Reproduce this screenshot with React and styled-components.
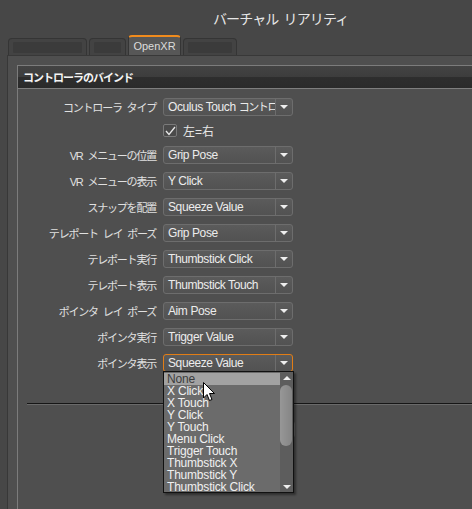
import styled, { createGlobalStyle } from "styled-components";

const GlobalStyle = createGlobalStyle`
  html, body {
    margin: 0;
    padding: 0;
    background: #474747;
  }
  body {
    font-family: "Liberation Sans", "Noto Sans CJK JP", sans-serif;
  }
`;

const Window = styled.div`
  width: 472px;
  height: 509px;
  overflow: hidden;
  background: #474747;
  display: flex;
  flex-direction: column;
`;

const TitleBar = styled.div`
  height: 35px;
  display: flex;
  align-items: center;
  padding-left: 213px;
  flex-shrink: 0;
`;

const Title = styled.h1`
  margin: 0;
  font-family: "Noto Sans CJK JP", sans-serif;
  font-size: 14px;
  font-weight: 400;
  letter-spacing: -0.9px;
  word-spacing: 3px;
  color: #e6e6e6;
`;

const TabBar = styled.div`
  height: 20px;
  display: flex;
  align-items: flex-end;
  gap: 2px;
  padding-left: 8px;
  flex-shrink: 0;
`;

const Tab = styled.div`
  box-sizing: border-box;
  width: ${(p) => p.$w}px;
  height: ${(p) => (p.$active ? 20 : 17)}px;
  border: 1px solid #353535;
  border-bottom: none;
  border-top: ${(p) => (p.$active ? "2px solid #f08b1d" : "1px solid #353535")};
  border-radius: 4px 4px 0 0;
  background: ${(p) => (p.$active ? "#575757" : "#434343")};
  padding: ${(p) => (p.$active ? "0" : "3px 4px 2px")};
  display: flex;
  align-items: center;
  justify-content: center;
  font-size: 11px;
  color: #dcdcdc;
`;

const TabInner = styled.div`
  width: 100%;
  height: 100%;
  background: #3b3b3b;
  border-radius: 1px;
`;

const Panel = styled.div`
  flex: 1;
  margin-left: 7px;
  border-left: 1px solid #383838;
  border-top: 1px solid #383838;
  background: #4f4f4f;
  padding: 9px 0 0 9px;
`;

const Group = styled.div`
  height: 100%;
  border-left: 1px solid #7c7c7c;
  border-top: 1px solid #7c7c7c;
`;

const GroupHeader = styled.div`
  height: 22px;
  border-bottom: 1px solid #7e7e7e;
  background: linear-gradient(#434343 0%, #3d3d3d 48%, #2e2e2e 52%, #2a2a2a 100%);
  display: flex;
  align-items: center;
  padding-left: 5px;
  font-family: "Noto Sans CJK JP", sans-serif;
  font-size: 11px;
  font-weight: 700;
  letter-spacing: -1px;
  color: #f4f4f4;
`;

const Rows = styled.div`
  display: grid;
  grid-template-columns: 138px 130px;
  grid-template-rows: 24px 23px;
  grid-auto-rows: 26px;
  column-gap: 7px;
  align-items: center;
  padding-top: 6px;
`;

const Label = styled.div`
  text-align: right;
  font-size: 11px;
  letter-spacing: -1.2px;
  word-spacing: 3px;
  color: #e0e0e0;
  white-space: nowrap;
`;

const Select = styled.div`
  position: relative;
  box-sizing: border-box;
  width: 130px;
  height: 18px;
  border: 1px solid ${(p) => (p.$open ? "#e17d16" : "#6d6d6d")};
  border-radius: 3px;
  background: linear-gradient(#5b5b5b, #525252);
  display: flex;
`;

const Value = styled.div`
  flex: 1;
  overflow: hidden;
  white-space: nowrap;
  padding-left: 4px;
  font-size: 12px;
  letter-spacing: -0.4px;
  line-height: 16px;
  color: #ececec;
`;

const Jp = styled.span`
  font-size: 11px;
  letter-spacing: -1.4px;
`;

const ArrowBox = styled.div`
  width: 16px;
  border-left: 1px solid #6d6d6d;
  display: flex;
  align-items: center;
  justify-content: center;
`;

const Triangle = styled.div`
  width: 0;
  height: 0;
  border-left: 4px solid transparent;
  border-right: 4px solid transparent;
  border-${(p) => (p.$up ? "bottom" : "top")}: 4px solid #eeeeee;
`;

const CheckRow = styled.label`
  display: flex;
  align-items: center;
  gap: 6px;
  font-size: 12px;
  color: #e6e6e6;
`;

const CheckBox = styled.div`
  box-sizing: border-box;
  width: 14px;
  height: 13px;
  border: 1px solid #7a7a7a;
  border-radius: 2px;
  background: #4a4a4a;
  display: flex;
  align-items: center;
  justify-content: center;
`;

const Separator = styled.div`
  margin: 27px 0 0 9px;
  height: 1px;
  background: #161616;
  border-bottom: 1px solid #6a6a6a;
`;

const ButtonRow = styled.div`
  display: flex;
  padding: 16px 0 0 152px;
`;

const Button = styled.div`
  box-sizing: border-box;
  width: 125px;
  height: 17px;
  border: 1px solid #6a6a6a;
  border-radius: 3px;
  background: #555555;
`;

const List = styled.div`
  position: absolute;
  z-index: 10;
  left: -1px;
  top: 16px;
  box-sizing: border-box;
  width: 131px;
  height: 122px;
  border: 1px solid #111111;
  background: #6b6b6b;
  box-shadow: 2px 2px 2px rgba(0, 0, 0, 0.4);
  display: flex;
`;

const Items = styled.div`
  flex: 1;
  padding-top: 1px;
  overflow: hidden;
`;

const Item = styled.div`
  height: 12px;
  line-height: 12px;
  padding-left: 3px;
  font-size: 12px;
  letter-spacing: -0.2px;
  color: ${(p) => (p.$hl ? "#3c3c3c" : "#f0f0f0")};
  background: ${(p) => (p.$hl ? "#a2a2a2" : "transparent")};
  white-space: nowrap;
`;

const ScrollBar = styled.div`
  width: 13px;
  background: #5d5d5d;
  display: flex;
  flex-direction: column;
  align-items: center;
`;

const ScrollArrow = styled.div`
  height: 11px;
  display: flex;
  align-items: center;
  justify-content: center;
`;

const Track = styled.div`
  flex: 1;
  width: 13px;
  display: flex;
  flex-direction: column;
`;

const Thumb = styled.div`
  margin-top: 2px;
  height: 61px;
  width: 12px;
  border-radius: 6px;
  background: linear-gradient(90deg, #979797, #858585);
`;

const Cursor = styled.svg`
  position: absolute;
  left: 39px;
  top: 10px;
  z-index: 11;
`;

const rows = [
  ["VR メニューの位置", "Grip Pose"],
  ["VR メニューの表示", "Y Click"],
  ["スナップを配置", "Squeeze Value"],
  ["テレポート レイ ポーズ", "Grip Pose"],
  ["テレポート実行", "Thumbstick Click"],
  ["テレポート表示", "Thumbstick Touch"],
  ["ポインタ レイ ポーズ", "Aim Pose"],
  ["ポインタ実行", "Trigger Value"],
];

const options = [
  "None",
  "X Click",
  "X Touch",
  "Y Click",
  "Y Touch",
  "Menu Click",
  "Trigger Touch",
  "Thumbstick X",
  "Thumbstick Y",
  "Thumbstick Click",
];

function Dropdown({ value, open, children }) {
  return (
    <Select $open={open}>
      <Value>{value}</Value>
      <ArrowBox>
        <Triangle />
      </ArrowBox>
      {children}
    </Select>
  );
}

export default function App() {
  return (
    <>
      <GlobalStyle />
      <Window>
        <TitleBar>
          <Title>バーチャル リアリティ</Title>
        </TitleBar>
        <TabBar>
          <Tab $w={79}>
            <TabInner />
          </Tab>
          <Tab $w={37}>
            <TabInner />
          </Tab>
          <Tab $w={53} $active>
            OpenXR
          </Tab>
          <Tab $w={54}>
            <TabInner />
          </Tab>
        </TabBar>
        <Panel>
          <Group>
            <GroupHeader>コントローラのバインド</GroupHeader>
            <Rows>
              <Label>コントローラ タイプ</Label>
              <Dropdown
                value={
                  <>
                    Oculus Touch <Jp>コントローラ</Jp>
                  </>
                }
              />
              <div />
              <CheckRow>
                <CheckBox>
                  <svg width="11" height="10" viewBox="0 0 11 10">
                    <path d="M1 5 L4 8.5 L10 1" fill="none" stroke="#e8e8e8" strokeWidth="1.3" />
                  </svg>
                </CheckBox>
                左=右
              </CheckRow>
              {rows.map(([label, value]) => [
                <Label key={label}>{label}</Label>,
                <Dropdown key={label + "v"} value={value} />,
              ])}
              <Label>ポインタ表示</Label>
              <Dropdown value="Squeeze Value" open>
                <List>
                  <Items>
                    {options.map((o, i) => (
                      <Item key={o} $hl={i === 0}>
                        {o}
                      </Item>
                    ))}
                  </Items>
                  <ScrollBar>
                    <ScrollArrow>
                      <Triangle $up />
                    </ScrollArrow>
                    <Track>
                      <Thumb />
                    </Track>
                    <ScrollArrow>
                      <Triangle />
                    </ScrollArrow>
                  </ScrollBar>
                  <Cursor width="13" height="20" viewBox="0 0 13 20">
                    <path
                      d="M0.5 0.5 L0.5 16 L4 12.5 L6.5 18.5 L9 17.5 L6.5 11.5 L11.5 11.5 Z"
                      fill="#ffffff"
                      stroke="#000000"
                      strokeWidth="1"
                    />
                  </Cursor>
                </List>
              </Dropdown>
            </Rows>
            <Separator />
            <ButtonRow>
              <Button />
            </ButtonRow>
          </Group>
        </Panel>
      </Window>
    </>
  );
}
